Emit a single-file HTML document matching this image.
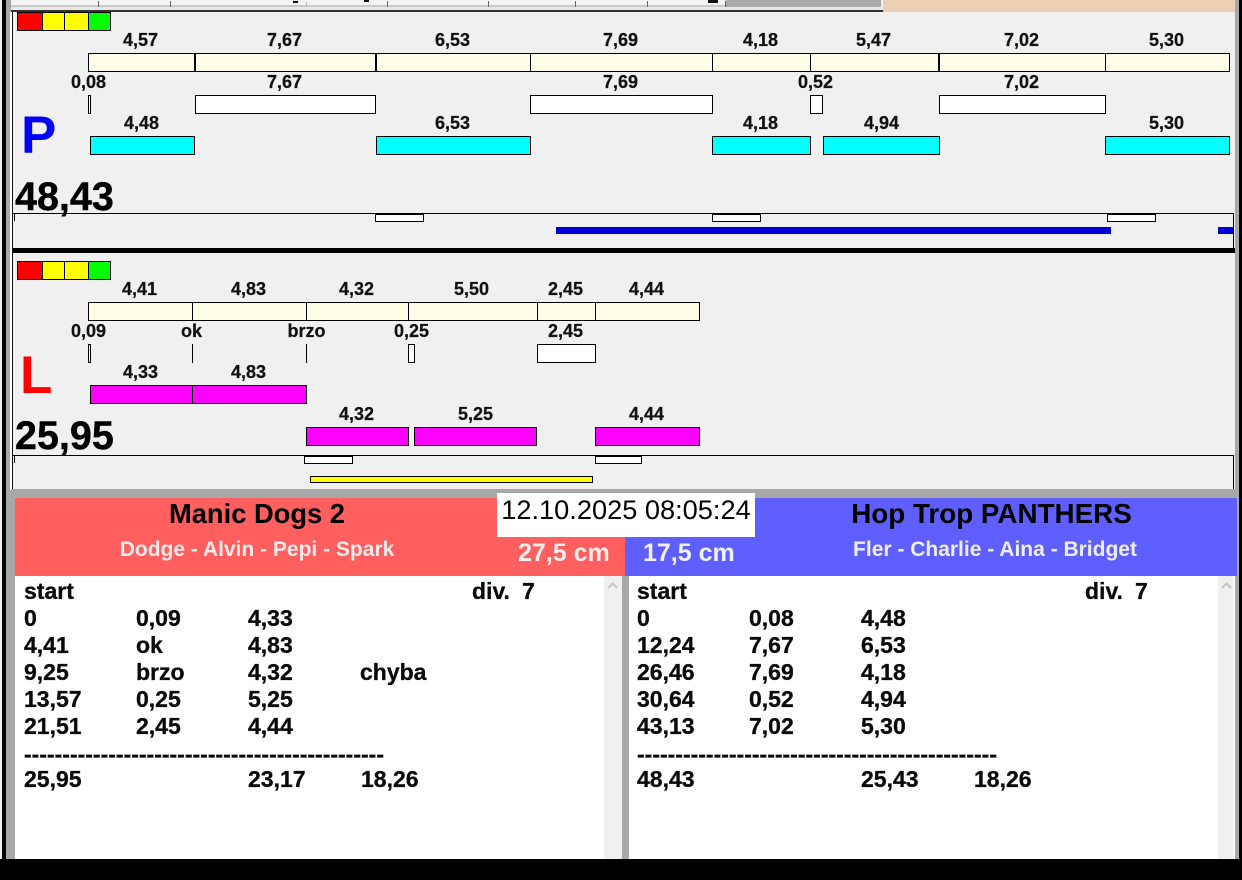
<!DOCTYPE html>
<html><head><meta charset="utf-8"><title>Agility</title>
<style>
html,body{margin:0;padding:0;background:#fff}
#p{position:relative;width:1242px;height:880px;overflow:hidden;background:#f0f0f0;font-family:"Liberation Sans",sans-serif;color:#000}
#p div{position:absolute;box-sizing:border-box}
.c{width:120px;margin-left:-59.500px;text-align:center;font:bold 18px/20px "Liberation Sans",sans-serif;white-space:nowrap;color:#111;-webkit-text-stroke:.25px #111}
.b{border:1px solid #000}
.y{background:#fffde8;height:19px}
.w{background:#fff;height:19px}
.a{background:#0ff;height:19px}
.m{background:#f0f;height:19px}
.r{font:bold 23px/27px "Liberation Sans",sans-serif;white-space:nowrap;height:27px;color:#0a0a0a;-webkit-text-stroke:.3px #0a0a0a}
.big{font:bold 39.500px/44px "Liberation Sans",sans-serif;white-space:nowrap;-webkit-text-stroke:.4px #000}
.s{background:#fff;height:8px;width:49px}
.k{background:#000;width:1px}
</style></head><body><div id="p">

<!-- window frame -->
<div style="left:2px;top:0;width:4px;height:880px;background:#000"></div>
<div style="left:6px;top:0;width:5px;height:880px;background:#a8a8a8"></div>
<div style="left:10px;top:12px;width:2px;height:478px;background:#fff"></div>
<div style="left:12px;top:10px;width:1px;height:480px;background:#111"></div>
<div style="left:11px;top:489px;width:4px;height:370px;background:#a8a8a8"></div>
<div style="left:1235px;top:0;width:4px;height:880px;background:#a8a8a8"></div>
<div style="left:1239px;top:0;width:3px;height:880px;background:#000"></div>

<!-- top tabs -->
<div style="left:11px;top:0;width:715px;height:7px;background:#f3f3f3"></div>
<div style="left:11px;top:5px;width:715px;height:2px;background:#c8c8c8"></div>
<div style="left:726px;top:0;width:155px;height:7px;background:#aaa"></div>
<div style="left:11px;top:7px;width:872px;height:3px;background:#e8e8e8"></div>
<div style="left:11px;top:10px;width:872px;height:2px;background:#333"></div>
<div style="left:883px;top:0;width:352px;height:12px;background:#eccfb2"></div>
<div style="left:98px;top:1px;width:1px;height:6px;background:#666"></div>
<div style="left:170px;top:1px;width:1px;height:6px;background:#666"></div>
<div style="left:306px;top:2px;width:1px;height:5px;background:#bbb"></div>
<div style="left:387px;top:1px;width:1px;height:6px;background:#666"></div>
<div style="left:488px;top:1px;width:1px;height:6px;background:#666"></div>
<div style="left:575px;top:1px;width:1px;height:6px;background:#666"></div>
<div style="left:647px;top:1px;width:1px;height:6px;background:#666"></div>
<div style="left:725px;top:1px;width:1px;height:6px;background:#666"></div>
<div style="left:293px;top:1px;width:5px;height:2px;background:#111"></div>
<div style="left:364px;top:0;width:5px;height:2px;background:#111"></div>
<div style="left:708px;top:0;width:10px;height:3px;background:#111"></div>

<!-- P panel -->
<div class="b" style="left:17px;top:12px;width:26px;height:19px;background:#f00"></div>
<div class="b" style="left:42px;top:12px;width:23px;height:19px;background:#ff0"></div>
<div class="b" style="left:64px;top:12px;width:25px;height:19px;background:#ff0"></div>
<div class="b" style="left:88px;top:12px;width:23px;height:19px;background:#0f0"></div>

<div class="c" style="left:140px;top:30px">4,57</div>
<div class="c" style="left:284px;top:30px">7,67</div>
<div class="c" style="left:452px;top:30px">6,53</div>
<div class="c" style="left:620px;top:30px">7,69</div>
<div class="c" style="left:760px;top:30px">4,18</div>
<div class="c" style="left:873px;top:30px">5,47</div>
<div class="c" style="left:1021px;top:30px">7,02</div>
<div class="c" style="left:1166px;top:30px">5,30</div>

<div class="b y" style="left:88px;top:53px;width:108px"></div>
<div class="b y" style="left:194px;top:53px;width:182px;border-left-width:2px"></div>
<div class="b y" style="left:375px;top:53px;width:156px;border-left-width:2px"></div>
<div class="b y" style="left:530px;top:53px;width:183px"></div>
<div class="b y" style="left:712px;top:53px;width:99px"></div>
<div class="b y" style="left:810px;top:53px;width:130px"></div>
<div class="b y" style="left:938px;top:53px;width:168px;border-left-width:2px"></div>
<div class="b y" style="left:1105px;top:53px;width:125px"></div>

<div class="c" style="left:88px;top:72px">0,08</div>
<div class="c" style="left:284px;top:72px">7,67</div>
<div class="c" style="left:620px;top:72px">7,69</div>
<div class="c" style="left:815px;top:72px">0,52</div>
<div class="c" style="left:1021px;top:72px">7,02</div>

<div class="b w" style="left:88px;top:95px;width:3px"></div>
<div class="b w" style="left:195px;top:95px;width:181px"></div>
<div class="b w" style="left:530px;top:95px;width:183px"></div>
<div class="b w" style="left:810px;top:95px;width:13px"></div>
<div class="b w" style="left:939px;top:95px;width:167px"></div>

<div style="left:21px;top:106px;font:bold 53px/60px 'Liberation Sans',sans-serif;color:#00f">P</div>

<div class="c" style="left:141px;top:113px">4,48</div>
<div class="c" style="left:452px;top:113px">6,53</div>
<div class="c" style="left:760px;top:113px">4,18</div>
<div class="c" style="left:881px;top:113px">4,94</div>
<div class="c" style="left:1166px;top:113px">5,30</div>

<div class="b a" style="left:90px;top:136px;width:105px"></div>
<div class="b a" style="left:376px;top:136px;width:155px"></div>
<div class="b a" style="left:712px;top:136px;width:99px"></div>
<div class="b a" style="left:823px;top:136px;width:117px"></div>
<div class="b a" style="left:1105px;top:136px;width:125px"></div>

<div class="big" style="left:15px;top:175px">48,43</div>

<div style="left:13px;top:213px;width:1221px;height:1px;background:#000"></div>
<div class="k" style="left:14px;top:214px;height:7px"></div>
<div class="k" style="left:1233px;top:213px;height:35px"></div>
<div class="b s" style="left:375px;top:214px"></div>
<div class="b s" style="left:712px;top:214px"></div>
<div class="b s" style="left:1107px;top:214px"></div>
<div style="left:556px;top:227px;width:555px;height:7px;background:#0000d8"></div>
<div style="left:1218px;top:227px;width:15px;height:7px;background:#0000d8"></div>

<div style="left:13px;top:248px;width:1222px;height:5px;background:#000"></div>

<!-- L panel -->
<div class="b" style="left:17px;top:261px;width:26px;height:19px;background:#f00"></div>
<div class="b" style="left:42px;top:261px;width:23px;height:19px;background:#ff0"></div>
<div class="b" style="left:64px;top:261px;width:25px;height:19px;background:#ff0"></div>
<div class="b" style="left:88px;top:261px;width:23px;height:19px;background:#0f0"></div>

<div class="c" style="left:139px;top:279px">4,41</div>
<div class="c" style="left:248px;top:279px">4,83</div>
<div class="c" style="left:356px;top:279px">4,32</div>
<div class="c" style="left:471px;top:279px">5,50</div>
<div class="c" style="left:565px;top:279px">2,45</div>
<div class="c" style="left:646px;top:279px">4,44</div>

<div class="b y" style="left:88px;top:302px;width:105px"></div>
<div class="b y" style="left:192px;top:302px;width:115px"></div>
<div class="b y" style="left:306px;top:302px;width:103px"></div>
<div class="b y" style="left:408px;top:302px;width:130px"></div>
<div class="b y" style="left:537px;top:302px;width:59px"></div>
<div class="b y" style="left:595px;top:302px;width:105px"></div>

<div class="c" style="left:88px;top:321px">0,09</div>
<div class="c" style="left:191px;top:321px">ok</div>
<div class="c" style="left:306px;top:321px">brzo</div>
<div class="c" style="left:411px;top:321px">0,25</div>
<div class="c" style="left:565px;top:321px">2,45</div>

<div class="b w" style="left:88px;top:344px;width:3px"></div>
<div class="k" style="left:192px;top:344px;height:19px"></div>
<div class="k" style="left:306px;top:344px;height:19px"></div>
<div class="b w" style="left:408px;top:344px;width:7px"></div>
<div class="b w" style="left:537px;top:344px;width:59px"></div>

<div style="left:20px;top:346px;font:bold 53px/60px 'Liberation Sans',sans-serif;color:#f00">L</div>

<div class="c" style="left:140px;top:362px">4,33</div>
<div class="c" style="left:248px;top:362px">4,83</div>

<div class="b m" style="left:90px;top:385px;width:103px"></div>
<div class="b m" style="left:192px;top:385px;width:115px"></div>

<div class="c" style="left:356px;top:404px">4,32</div>
<div class="c" style="left:475px;top:404px">5,25</div>
<div class="c" style="left:646px;top:404px">4,44</div>

<div class="b m" style="left:306px;top:427px;width:103px"></div>
<div class="b m" style="left:414px;top:427px;width:123px"></div>
<div class="b m" style="left:595px;top:427px;width:105px"></div>

<div class="big" style="left:15px;top:414px">25,95</div>

<div style="left:13px;top:455px;width:1221px;height:1px;background:#000"></div>
<div class="k" style="left:14px;top:456px;height:7px"></div>
<div class="k" style="left:1233px;top:455px;height:34px"></div>
<div class="b s" style="left:304px;top:456px"></div>
<div class="b s" style="left:595px;top:456px;width:47px"></div>
<div class="b" style="left:310px;top:476px;width:283px;height:7px;background:#ff0"></div>

<!-- bottom -->
<div style="left:11px;top:489px;width:1224px;height:9px;background:#a8a8a8"></div>
<div style="left:15px;top:498px;width:610px;height:78px;background:#ff5f5f"></div>
<div style="left:625px;top:498px;width:612px;height:78px;background:#5f5fff"></div>

<div style="left:15px;top:498px;width:484px;text-align:center;font:bold 27.300px/32px 'Liberation Sans',sans-serif;white-space:nowrap">Manic Dogs 2</div>
<div style="left:755px;top:498px;width:473px;text-align:center;font:bold 27.800px/32px 'Liberation Sans',sans-serif;white-space:nowrap">Hop Trop PANTHERS</div>
<div style="left:15px;top:538px;width:484px;text-align:center;font:bold 21px/24px 'Liberation Sans',sans-serif;color:#fbeaea;white-space:nowrap">Dodge - Alvin - Pepi - Spark</div>
<div style="left:755px;top:538px;width:480px;text-align:center;font:bold 21px/24px 'Liberation Sans',sans-serif;color:#eef;white-space:nowrap">Fler - Charlie - Aina - Bridget</div>

<div style="left:497px;top:493px;width:258px;height:44px;background:#fff"></div>
<div style="left:497px;top:494px;width:258px;text-align:center;font:27.200px/32px 'Liberation Sans',sans-serif;white-space:nowrap">12.10.2025 08:05:24</div>
<div style="left:518px;top:538px;font:bold 25px/30px 'Liberation Sans',sans-serif;color:#fdeeee;white-space:nowrap">27,5 cm</div>
<div style="left:643px;top:538px;font:bold 25px/30px 'Liberation Sans',sans-serif;color:#f2f2ff;white-space:nowrap">17,5 cm</div>

<div style="left:15px;top:576px;width:589px;height:283px;background:#fff"></div>
<div style="left:604px;top:576px;width:18px;height:283px;background:#f0f0f0"></div>
<div style="left:622px;top:576px;width:7px;height:283px;background:#a8a8a8"></div>
<div style="left:629px;top:576px;width:589px;height:283px;background:#fff"></div>
<div style="left:1218px;top:576px;width:16px;height:283px;background:#f0f0f0"></div>
<div style="left:1234px;top:576px;width:1px;height:283px;background:#fff"></div>

<svg style="position:absolute;left:606px;top:581px" width="13" height="9"><path d="M2 7L6.500 2.500L11 7" fill="none" stroke="#c4c4c4" stroke-width="2"/></svg>
<svg style="position:absolute;left:1220px;top:581px" width="13" height="9"><path d="M2 7L6.500 2.500L11 7" fill="none" stroke="#c4c4c4" stroke-width="2"/></svg>

<!-- left table -->
<div class="r" style="left:24px;top:578px">start</div>
<div class="r" style="left:472px;top:578px">div.</div>
<div class="r" style="left:522px;top:578px">7</div>
<div class="r" style="left:24px;top:605px">0</div><div class="r" style="left:136px;top:605px">0,09</div><div class="r" style="left:248px;top:605px">4,33</div>
<div class="r" style="left:24px;top:632px">4,41</div><div class="r" style="left:136px;top:632px">ok</div><div class="r" style="left:248px;top:632px">4,83</div>
<div class="r" style="left:24px;top:659px">9,25</div><div class="r" style="left:136px;top:659px">brzo</div><div class="r" style="left:248px;top:659px">4,32</div><div class="r" style="left:360px;top:659px">chyba</div>
<div class="r" style="left:24px;top:686px">13,57</div><div class="r" style="left:136px;top:686px">0,25</div><div class="r" style="left:248px;top:686px">5,25</div>
<div class="r" style="left:24px;top:713px">21,51</div><div class="r" style="left:136px;top:713px">2,45</div><div class="r" style="left:248px;top:713px">4,44</div>
<div class="r" style="left:24px;top:741px">-----------------------------------------------</div>
<div class="r" style="left:24px;top:766px">25,95</div><div class="r" style="left:248px;top:766px">23,17</div><div class="r" style="left:361px;top:766px">18,26</div>

<!-- right table -->
<div class="r" style="left:637px;top:578px">start</div>
<div class="r" style="left:1085px;top:578px">div.</div>
<div class="r" style="left:1135px;top:578px">7</div>
<div class="r" style="left:637px;top:605px">0</div><div class="r" style="left:749px;top:605px">0,08</div><div class="r" style="left:861px;top:605px">4,48</div>
<div class="r" style="left:637px;top:632px">12,24</div><div class="r" style="left:749px;top:632px">7,67</div><div class="r" style="left:861px;top:632px">6,53</div>
<div class="r" style="left:637px;top:659px">26,46</div><div class="r" style="left:749px;top:659px">7,69</div><div class="r" style="left:861px;top:659px">4,18</div>
<div class="r" style="left:637px;top:686px">30,64</div><div class="r" style="left:749px;top:686px">0,52</div><div class="r" style="left:861px;top:686px">4,94</div>
<div class="r" style="left:637px;top:713px">43,13</div><div class="r" style="left:749px;top:713px">7,02</div><div class="r" style="left:861px;top:713px">5,30</div>
<div class="r" style="left:637px;top:741px">-----------------------------------------------</div>
<div class="r" style="left:637px;top:766px">48,43</div><div class="r" style="left:861px;top:766px">25,43</div><div class="r" style="left:974px;top:766px">18,26</div>

<div style="left:0;top:859px;width:1242px;height:21px;background:#000"></div>
</div></body></html>
